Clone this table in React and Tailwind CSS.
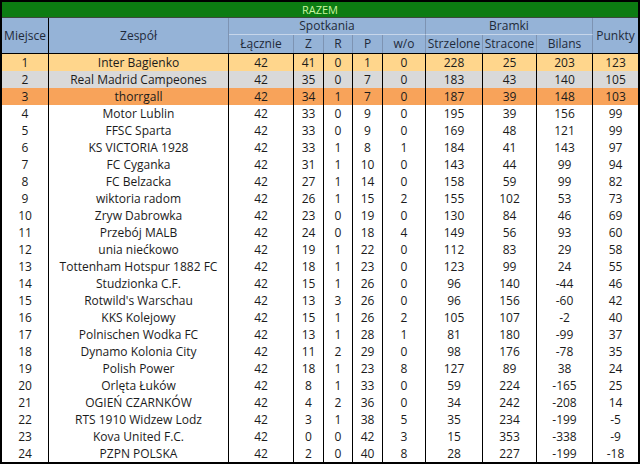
import React from 'react';

const cols = 'grid grid-cols-[47px_180px_65px_30px_29px_30px_43px_57px_54px_56px_45px]';

const teams = [
  [1, 'Inter Bagienko', 42, 41, 0, 1, 0, 228, 25, 203, 123],
  [2, 'Real Madrid Campeones', 42, 35, 0, 7, 0, 183, 43, 140, 105],
  [3, 'thorrgall', 42, 34, 1, 7, 0, 187, 39, 148, 103],
  [4, 'Motor Lublin', 42, 33, 0, 9, 0, 195, 39, 156, 99],
  [5, 'FFSC Sparta', 42, 33, 0, 9, 0, 169, 48, 121, 99],
  [6, 'KS VICTORIA 1928', 42, 33, 1, 8, 1, 184, 41, 143, 97],
  [7, 'FC Cyganka', 42, 31, 1, 10, 0, 143, 44, 99, 94],
  [8, 'FC Belzacka', 42, 27, 1, 14, 0, 158, 59, 99, 82],
  [9, 'wiktoria radom', 42, 26, 1, 15, 2, 155, 102, 53, 73],
  [10, 'Zryw Dabrowka', 42, 23, 0, 19, 0, 130, 84, 46, 69],
  [11, 'Przebój MALB', 42, 24, 0, 18, 4, 149, 56, 93, 60],
  [12, 'unia niećkowo', 42, 19, 1, 22, 0, 112, 83, 29, 58],
  [13, 'Tottenham Hotspur 1882 FC', 42, 18, 1, 23, 0, 123, 99, 24, 55],
  [14, 'Studzionka C.F.', 42, 15, 1, 26, 0, 96, 140, -44, 46],
  [15, "Rotwild's Warschau", 42, 13, 3, 26, 0, 96, 156, -60, 42],
  [16, 'KKS Kolejowy', 42, 15, 1, 26, 2, 105, 107, -2, 40],
  [17, 'Polnischen Wodka FC', 42, 13, 1, 28, 1, 81, 180, -99, 37],
  [18, 'Dynamo Kolonia City', 42, 11, 2, 29, 0, 98, 176, -78, 35],
  [19, 'Polish Power', 42, 18, 1, 23, 8, 127, 89, 38, 24],
  [20, 'Orlęta Łuków', 42, 8, 1, 33, 0, 59, 224, -165, 25],
  [21, 'OGIEŃ CZARNKÓW', 42, 4, 2, 36, 0, 34, 242, -208, 14],
  [22, 'RTS 1910 Widzew Lodz', 42, 3, 1, 38, 5, 35, 234, -199, -5],
  [23, 'Kova United F.C.', 42, 0, 0, 42, 3, 15, 353, -338, -9],
  [24, 'PZPN POLSKA', 42, 2, 0, 40, 8, 28, 227, -199, -18],
];

const rowBg = {
  1: 'bg-[#ffd68c]',
  2: 'bg-[#d9d9d9]',
  3: 'bg-[#f8a35a]',
};

const hCell = 'flex items-center justify-center border-r border-[#7d93b2]';

export default function App() {
  return (
    <div className="w-[640px] h-[464px] bg-white border-2 border-black font-['Open_Sans',sans-serif] text-[12px] text-[#1b1b1b] leading-none overflow-hidden">
      <div className="h-[16px] bg-[#0c7c12] text-[#c8f5a0] text-[11px] flex items-center justify-center border-b border-[#3a4a3a]">
        RAZEM
      </div>

      <div className={`${cols} grid-rows-[17px_18px] bg-[#95b3d7] text-[#1f2a3a] border-b border-black`}>
        <div className="row-span-2 flex items-center justify-center border-r border-black">Miejsce</div>
        <div className={`row-span-2 ${hCell}`}>Zespół</div>
        <div className={`col-span-5 ${hCell} border-b border-b-[#c7d6ea]`}>Spotkania</div>
        <div className={`col-span-3 ${hCell} border-b border-b-[#c7d6ea]`}>Bramki</div>
        <div className="row-span-2 flex items-center justify-center">Punkty</div>
        {['Łącznie', 'Z', 'R', 'P', 'w/o', 'Strzelone', 'Stracone', 'Bilans'].map((h) => (
          <div key={h} className={hCell}>{h}</div>
        ))}
      </div>

      {teams.map((t) => (
        <div key={t[0]} className={`${cols} h-[17px] ${rowBg[t[0]] || 'bg-white'}`}>
          {t.map((v, i) => (
            <div
              key={i}
              className={`flex items-center justify-center ${i < t.length - 1 ? 'border-r border-black' : ''}`}
            >
              {v}
            </div>
          ))}
        </div>
      ))}
    </div>
  );
}
